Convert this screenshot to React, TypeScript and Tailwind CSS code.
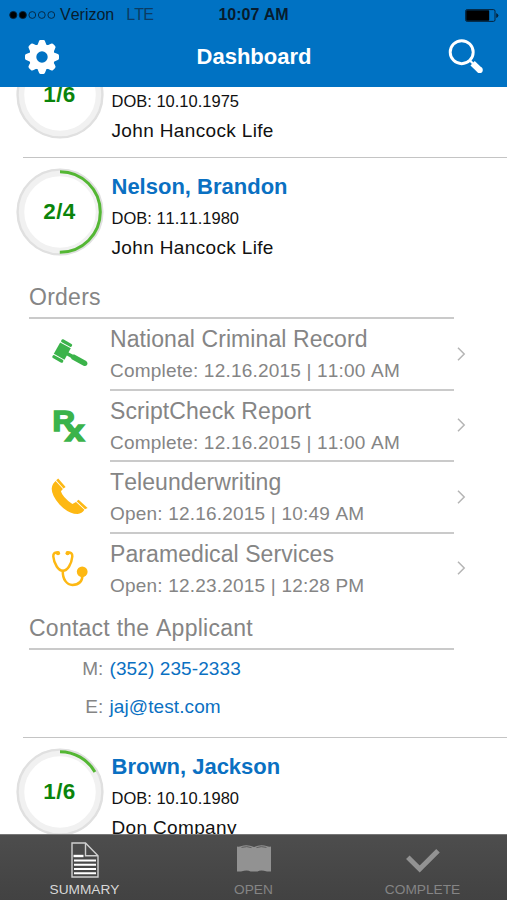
import React from 'react';

interface Order {
  title: string;
  status: string;
  icon: React.ReactNode;
}

interface PatientProps {
  name: string;
  dob: string;
  company: string;
  done: number;
  total: number;
  children?: React.ReactNode;
}

const GearIcon = () => (
  <svg width="36" height="36" viewBox="-18 -18 36 36" fill="#fff">
    {[0, 45, 90, 135, 180, 225, 270, 315].map((a) => (
      <path
        key={a}
        transform={`rotate(${a})`}
        d="M-6 -10.8 Q-4 -12 -3.5 -14.6 Q-3 -17 -1.6 -17 H1.6 Q3 -17 3.5 -14.6 Q4 -12 6 -10.8 Z"
      />
    ))}
    <circle r="9.3" fill="none" stroke="#fff" strokeWidth="7.2" />
  </svg>
);

const SearchIcon = () => (
  <svg width="36" height="36" viewBox="0 0 36 36" fill="none" stroke="#fff">
    <circle cx="13.7" cy="13.2" r="11.5" strokeWidth="2.9" />
    <path d="M21.5 21 L25 24.5" strokeWidth="2.2" />
    <path d="M24.6 24.3 L31.6 30.9" strokeWidth="6.2" />
    <circle cx="31.7" cy="31" r="3.1" fill="#fff" stroke="none" />
  </svg>
);

const GavelIcon = () => (
  <svg width="38" height="32" viewBox="0 0 38 32" fill="#3bb34a">
    <g transform="translate(12 13) rotate(29)">
      <rect x="-5.8" y="-6.6" width="12.2" height="13" />
      <rect x="-5.8" y="-10.8" width="12" height="3.2" rx="1.3" />
      <rect x="-5.8" y="7.4" width="12" height="3.2" rx="1.3" />
      <path d="M5 -2 H11 L12.5 -3 H26 Q28.6 -2.4 28.6 -0.2 Q28.6 2.2 26 2.5 H12.5 L11 1.6 H5 Z" />
    </g>
  </svg>
);

const RxIcon = () => (
  <svg width="38" height="38" viewBox="0 0 38 38" fill="#3bb34a" stroke="#3bb34a">
    <text x="2.6" y="24" fontFamily="Liberation Sans, sans-serif" fontWeight="700" fontSize="30" strokeWidth="1.6" textLength="22.5" lengthAdjust="spacingAndGlyphs">R</text>
    <text x="15" y="34" fontFamily="Liberation Sans, sans-serif" fontWeight="700" fontSize="29" strokeWidth="1.6" textLength="19.5" lengthAdjust="spacingAndGlyphs">x</text>
  </svg>
);

const PhoneIcon = () => (
  <svg width="38" height="38" viewBox="0 0 38 38" fill="#fdb813">
    <path d="M3.2 5.8 Q4 4.2 5.6 2.9 L12.9 11 L10.9 13.2 Q12.5 19.3 22.4 26 L26 23.9 L34.4 31.8 Q32 35.5 27.6 36 Q18.5 36 9.5 26.5 Q1.6 17.5 1.7 10.6 Q1.8 8.1 3.2 5.8 Z" />
    <path d="M6.2 2.3 L8.2 0.6 L15.6 8.9 L13.5 10.5 Z" />
    <path d="M26.6 23.3 L28.6 21.7 L37.6 30 L35 31.3 Z" />
  </svg>
);

const StethoscopeIcon = () => (
  <svg width="38" height="38" viewBox="0 0 38 38" fill="none" stroke="#fdb813" strokeLinecap="round">
    <path d="M8 2.7 Q3 1.8 3.3 6.5 C4 14 8.6 20.8 12.8 20.8 C17.5 20.8 21.6 14 22.3 6.5 Q22.6 1.8 17.6 2.7" strokeWidth="2.5" />
    <path d="M12.8 21 C12.5 29.5 17 34.9 22.4 34.9 C28.6 34.9 32.4 31.6 32.4 25" strokeWidth="2.5" />
    <circle cx="8" cy="3.2" r="2.1" fill="#fdb813" stroke="none" />
    <circle cx="17.6" cy="3.2" r="2.1" fill="#fdb813" stroke="none" />
    <circle cx="32.2" cy="21.8" r="5.4" fill="#fdb813" stroke="none" />
  </svg>
);

const DocumentIcon = () => (
  <svg width="28" height="36" viewBox="0 0 28 36" fill="none" stroke="#cfcfcf" strokeWidth="1.4">
    <path d="M1 1 H14.5 L27 13.8 V35 H1 Z" />
    <path d="M14.5 1 V13.8 H27" />
    <path d="M2.5 14 H12.5" strokeWidth="2.4" stroke="#fff" />
    <path d="M3 18.5 H25 M3 22.8 H25 M3 27 H25 M3 31.2 H25" strokeWidth="2" stroke="#fff" />
  </svg>
);

const BookIcon = () => (
  <svg width="34" height="27" viewBox="0 0 34 27" fill="#929292">
    <path d="M0 1.6 Q3 1.8 4.5 1 Q10.5 -1 17 2 Q23.5 -1 29.5 1 Q31 1.8 34 1.6 V26.5 H30 Q23.5 24.6 20.5 26.5 H13.5 Q10.5 24.6 4 26.5 H0 Z" />
    <path d="M4.5 2.4 Q10 0.8 14.5 2.6 M19.5 2.6 Q24 0.8 29.5 2.4" fill="none" stroke="#5c5c5c" strokeWidth="1" />
  </svg>
);

const CheckIcon = () => (
  <svg width="34" height="24" viewBox="0 0 34 24" fill="none" stroke="#929292" strokeWidth="5">
    <path d="M1.8 8.2 L13.7 20 L32 1.8" />
  </svg>
);

const ProgressRing: React.FC<{ done: number; total: number }> = ({ done, total }) => {
  const length = 2 * Math.PI * 40.3;
  return (
    <div className="relative w-[88px] h-[88px] shrink-0 flex items-center justify-center">
      <svg className="absolute inset-0" width="88" height="88" viewBox="0 0 88 88" fill="none">
        <circle cx="44" cy="44" r="39.5" stroke="#f1f1f1" strokeWidth="7.5" />
        <circle cx="44" cy="44" r="42.4" stroke="#e0e0e0" strokeWidth="2.4" />
        <circle
          cx="44"
          cy="44"
          r="40.3"
          stroke="#54b734"
          strokeWidth="3"
          strokeDasharray={`${(length * done) / total} ${length}`}
          transform="rotate(-90 44 44)"
        />
      </svg>
      <span className="relative text-[22.5px] tracking-[0.4px] pr-px font-bold text-[#0b840b]">{done}/{total}</span>
    </div>
  );
};

const Patient: React.FC<PatientProps> = ({ name, dob, company, done, total, children }) => (
  <section>
    <div className="ml-[23px] h-[1.5px] bg-[#c4c4c4]" />
    <div className="flex h-[116px] pl-4 pt-[10px]">
      <ProgressRing done={done} total={total} />
      <div className="pl-[7.5px] pt-[3px] text-[#111]">
        <h2 className="text-[22px] leading-[32px] font-bold text-[#0a70c2]">{name}</h2>
        <p className="text-[16.5px] leading-[30px]">DOB: {dob}</p>
        <p className="text-[19px] leading-[29px] tracking-[0.35px]">{company}</p>
      </div>
    </div>
    {children}
  </section>
);

const SectionTitle: React.FC<{ children: React.ReactNode }> = ({ children }) => (
  <h3 className="ml-[29px] w-[425px] h-[43px] border-b-2 border-[#cacaca] text-[23px] leading-[43px] tracking-[0.25px] text-[#858585]">{children}</h3>
);

const orders: Order[] = [
  { title: 'National Criminal Record', status: 'Complete: 12.16.2015 | 11:00 AM', icon: <GavelIcon /> },
  { title: 'ScriptCheck Report', status: 'Complete: 12.16.2015 | 11:00 AM', icon: <RxIcon /> },
  { title: 'Teleunderwriting', status: 'Open: 12.16.2015 | 10:49 AM', icon: <PhoneIcon /> },
  { title: 'Paramedical Services', status: 'Open: 12.23.2015 | 12:28 PM', icon: <StethoscopeIcon /> },
];

const OrderRow: React.FC<{ order: Order; last: boolean }> = ({ order, last }) => (
  <li className="flex h-[71.5px] text-[#858585]">
    <div className="w-[60px] ml-[50px] h-[70px] flex items-center shrink-0">{order.icon}</div>
    <div className={last ? 'w-[344px] shrink-0' : 'w-[344px] shrink-0 border-b-2 border-[#cacaca]'}>
      <p className="text-[23px] leading-[30px] pt-[5px] tracking-[0.08px] whitespace-nowrap">{order.title}</p>
      <p className="text-[19px] leading-[34px] tracking-[0.2px] whitespace-nowrap">{order.status}</p>
    </div>
    <div className="h-[69px] flex items-center pl-[3px]">
      <svg width="9" height="14" viewBox="0 0 9 14" fill="none" stroke="#b5b5b5" strokeWidth="1.5">
        <path d="M1 0.8 L7.2 7 L1 13.2" />
      </svg>
    </div>
  </li>
);

const App: React.FC = () => (
  <div className="w-[507px] h-[900px] flex flex-col overflow-hidden bg-white font-['Liberation_Sans',sans-serif] [font-kerning:none]">
    <header className="h-[87px] shrink-0 bg-[#0072c3] relative z-10">
      <div className="grid grid-cols-3 h-[30px] items-center px-[9px] text-[16px] text-[#071c2e]">
        <div className="flex items-center whitespace-nowrap">
          <svg width="48" height="10" viewBox="0 0 48 10" stroke="#06233b" strokeWidth="0.9" fill="none">
            <circle cx="4.3" cy="5" r="3.6" fill="#000" />
            <circle cx="13.8" cy="5" r="3.6" fill="#000" />
            <circle cx="23.3" cy="5" r="3.4" />
            <circle cx="32.8" cy="5" r="3.4" />
            <circle cx="42.3" cy="5" r="3.4" />
          </svg>
          <span className="ml-[3px]">Verizon</span>
          <span className="ml-3 text-[#0b3c63] tracking-[-0.8px]">LTE</span>
        </div>
        <span className="text-center font-bold whitespace-nowrap">10:07 AM</span>
        <svg className="justify-self-end mr-[-1px]" width="34" height="13" viewBox="0 0 34 13">
          <rect x="0.6" y="0.6" width="29.4" height="11.8" rx="1.5" fill="none" stroke="#05243d" strokeWidth="1" />
          <rect x="1.2" y="1.2" width="23" height="10.6" rx="0.8" fill="#000" />
          <path d="M31.2 4 Q33.4 5 33.4 6.5 Q33.4 8 31.2 9 Z" fill="#05243d" />
        </svg>
      </div>
      <div className="flex items-center justify-between h-[54px] pl-6 pr-[23px]">
        <GearIcon />
        <h1 className="text-[22px] leading-[30px] font-bold text-white">Dashboard</h1>
        <SearchIcon />
      </div>
    </header>

    <main className="flex-1 min-h-0 overflow-hidden">
      <div className="-mt-[48px]">
        <Patient name="Hill, Jackson" dob="10.10.1975" company="John Hancock Life" done={1} total={6} />

        <Patient name="Nelson, Brandon" dob="11.11.1980" company="John Hancock Life" done={2} total={4}>
          <div className="pt-[2px]">
            <SectionTitle>Orders</SectionTitle>
          </div>
          <ul>
            {orders.map((order, i) => (
              <OrderRow key={order.title} order={order} last={i === orders.length - 1} />
            ))}
          </ul>
          <div className="pt-[2px]">
            <SectionTitle>Contact the Applicant</SectionTitle>
          </div>
          <dl className="grid grid-cols-[103.5px_1fr] gap-x-[6px] h-[86.5px] content-start text-[19px] leading-[37.5px] tracking-[0.1px] text-[#858585]">
            <dt className="text-right">M:</dt>
            <dd className="text-[#0a70c2]">(352) 235-2333</dd>
            <dt className="text-right">E:</dt>
            <dd className="text-[#0a70c2]">jaj@test.com</dd>
          </dl>
        </Patient>

        <Patient name="Brown, Jackson" dob="10.10.1980" company="Don Company" done={1} total={6} />
      </div>
    </main>

    <nav className="h-[66px] shrink-0 grid grid-cols-3 border-t border-[#777] bg-linear-to-b from-[#4d4d4d] to-[#424242] text-[13.7px] leading-[16px] text-[#858585]">
      <div className="flex flex-col items-center text-[#d8d8d8]">
        <div className="h-[47px] flex items-center pt-[2px]"><DocumentIcon /></div>
        SUMMARY
      </div>
      <div className="flex flex-col items-center">
        <div className="h-[47px] flex items-center"><BookIcon /></div>
        OPEN
      </div>
      <div className="flex flex-col items-center">
        <div className="h-[47px] flex items-center pt-[4px]"><CheckIcon /></div>
        COMPLETE
      </div>
    </nav>
  </div>
);

export default App;
